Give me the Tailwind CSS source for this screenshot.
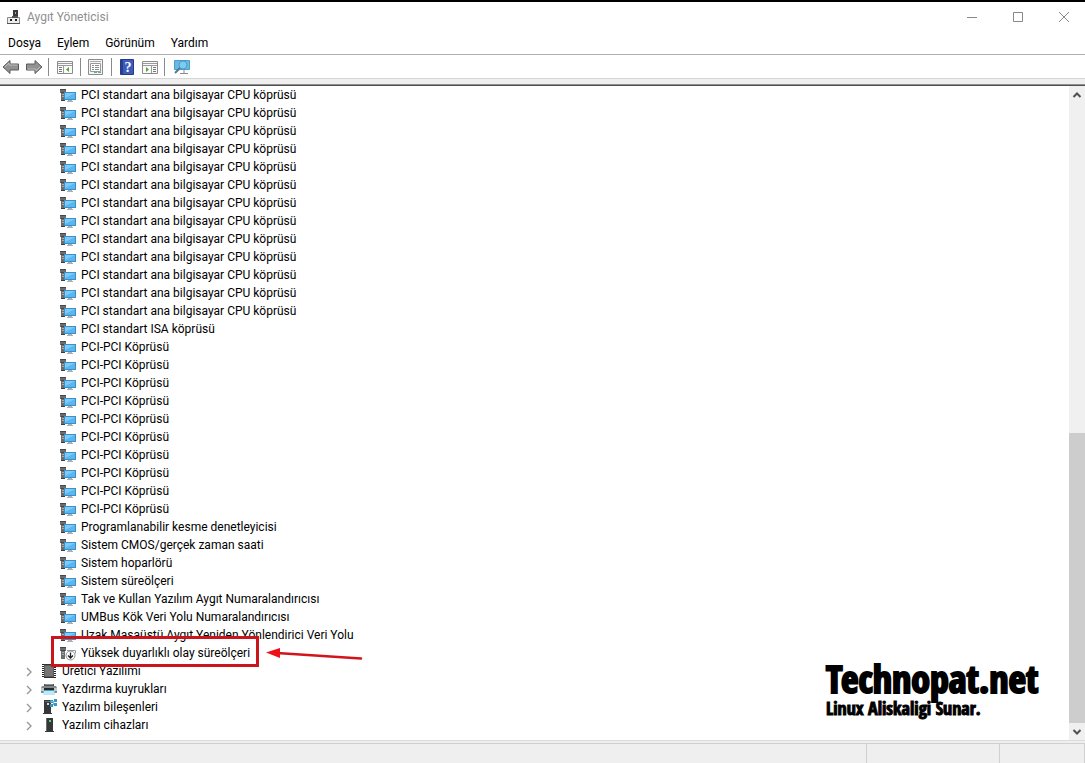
<!DOCTYPE html>
<html lang="tr">
<head>
  <meta charset="UTF-8">
  <meta name="viewport" content="width=device-width, initial-scale=1.0">
  <title>Aygıt Yöneticisi</title>
  <script src="https://cdn.jsdelivr.net/npm/@tailwindcss/browser@4"></script>
</head>
<body class="h-screen flex flex-col overflow-hidden bg-white border-t-2 border-black text-black text-[12px] leading-[18px] font-['Segoe_UI','Roboto',sans-serif]">

  <!-- Icon sprite -->
  <svg class="hidden" xmlns="http://www.w3.org/2000/svg">
    <symbol id="icon-system" viewBox="0 0 16 16">
      <path d="M0 2h6v4H5v8H1V6H0z" fill="#6a6d70" />
      <path d="M0 2h6v1H0zM1 5h4v1H1z" fill="#46494c" />
      <path d="M2 7h2v1H2zM2 9h2v1H2z" fill="#a9adb0" />
      <path d="M1 13h4v1H1z" fill="#3b3e40" />
      <path d="M4 5h12v8H4z" fill="#3f8fc4" />
      <path d="M5 6h10v6H5z" fill="#58b7f0" />
      <path d="M5 6h10L5 11z" fill="#7fcbf7" />
      <path d="M8 13h4v1H8zM7 14h6v1H7z" fill="#a5b0b8" />
    </symbol>
    <symbol id="icon-disabled" viewBox="0 0 16 16">
      <path d="M0 2h6v4H5v8H1V6H0z" fill="#6a6d70" />
      <path d="M0 2h6v1H0zM1 5h4v1H1z" fill="#46494c" />
      <path d="M2 7h2v1H2zM2 9h2v1H2z" fill="#a9adb0" />
      <path d="M7 5.500h8.500v3" fill="none" stroke="#999" />
      <circle cx="10.500" cy="10.500" r="4.500" fill="#fff" stroke="#8f8f8f" />
      <path d="M10.500 7.500v5.500M8 10.500l2.500 2.500L13 10.500" fill="none" stroke="#222" stroke-width="1.300" />
    </symbol>
    <symbol id="icon-firmware" viewBox="0 0 16 16">
      <path d="M3 2h8l2 2v10H3z" fill="#5b5b5b" />
      <path d="M4 3h6l2 2v8H4z" fill="#757575" />
      <path d="M2 1v14M14 4v11" stroke="#222" stroke-width="2" stroke-dasharray="1 1" />
      <path d="M3 1.500h8M11 1.500l2.500 2.500M3 14.500h10" stroke="#333" fill="none" />
    </symbol>
    <symbol id="icon-printer" viewBox="0 0 16 16">
      <path d="M3 3h10v3H3z" fill="#4c5255" />
      <path d="M4 3h8v1H4z" fill="#8b9296" />
      <path d="M1 5h14l1 2v5H0V7z" fill="#83898c" />
      <path d="M0 7h3v3H0zM13 7h3v3h-3z" fill="#c3c8ca" />
      <path d="M3 7h10v2H3z" fill="#26292b" />
      <path d="M3 9h10l1 5H2z" fill="#bfe8f6" />
      <path d="M3 9h10v1H3z" fill="#3da3c9" />
    </symbol>
    <symbol id="icon-component" viewBox="0 0 16 16">
      <path d="M3 1h7v13H3zM2 14h9v1H2z" fill="#34383a" />
      <path d="M4 2h5v1H4z" fill="#63696c" />
      <path d="M6 4h2v2H6z" fill="#c5e5cb" />
      <path d="M9 1h3v3H9zM13 0h3v3h-3zM9 5h3v3H9zM13 4h3v3h-3z" fill="#3d94bd" />
      <path d="M10 2h3v1h-3zM12 3h1v3h-1z" fill="#6dbde0" />
    </symbol>
    <symbol id="icon-softdevice" viewBox="0 0 16 16">
      <path d="M5 1h7v13H5zM4 14h9v1H4z" fill="#34383a" />
      <path d="M5 1h1v13H5z" fill="#686e70" />
      <path d="M8 3h2v2H8z" fill="#5ed078" />
    </symbol>
    <symbol id="icon-chevron" viewBox="0 0 8 10">
      <path d="M2 1l4 4-4 4" fill="none" stroke="#999" stroke-width="1.400" />
    </symbol>
    <symbol id="icon-arrow" viewBox="0 0 18 16">
      <path d="M1 8l7-6.500V5h8.500v6H8v3.500z" fill="#929292" stroke="#5b5b5b" stroke-linejoin="round" />
      <path d="M3 8l4-4v2h8.500" fill="none" stroke="#bdbdbd" />
    </symbol>
  </svg>

  <!-- Title bar -->
  <header class="flex items-center h-8 pl-[6px] pb-[3px] text-[#8f8f8f] shrink-0">
    <svg class="size-4" viewBox="0 0 16 16">
      <path d="M7 1h5v7H7z" fill="#3a3a3a" />
      <path d="M9 3h1v2H9z" fill="#aaa" />
      <path d="M1.500 8.500h12v6h-12z" fill="#ededed" stroke="#888" />
      <path d="M4 10h2v2H4zM9 10h2v2H9z" fill="#222" />
      <path d="M1 14h13v1H1zM6 7h6v2H6z" fill="#555" />
    </svg>
    <h1 class="ml-[5px]">Aygıt Yöneticisi</h1>
    <div class="ml-auto -mr-[2px] flex">
      <button class="w-[46px] h-7 flex items-center justify-center" aria-label="Simge durumuna küçült">
        <svg class="size-3" viewBox="0 0 12 12"><path d="M1 6.500h10" stroke="#888" /></svg>
      </button>
      <button class="w-[46px] h-7 flex items-center justify-center" aria-label="Ekranı kapla">
        <svg class="size-3" viewBox="0 0 12 12"><path d="M1.500 1.500h9v9h-9z" fill="none" stroke="#888" /></svg>
      </button>
      <button class="w-[46px] h-7 flex items-center justify-center" aria-label="Kapat">
        <svg class="size-3" viewBox="0 0 12 12"><path d="M1 1l10 10M11 1L1 11" stroke="#888" /></svg>
      </button>
    </div>
  </header>

  <!-- Menu bar -->
  <nav class="flex gap-4 h-5 pl-2 shrink-0">
    <a href="#">Dosya</a>
    <a href="#">Eylem</a>
    <a href="#">Görünüm</a>
    <a href="#">Yardım</a>
  </nav>

  <!-- Toolbar -->
  <div class="flex items-center h-6 pl-[2px] border-t border-[#b0b0b0] shrink-0">
    <button aria-label="Geri"><svg class="w-[18px] h-4"><use href="#icon-arrow" /></svg></button>
    <button class="ml-[5px] rotate-180" aria-label="İleri"><svg class="w-[18px] h-4"><use href="#icon-arrow" /></svg></button>
    <span class="w-px h-[18px] bg-[#8a8a8a] mx-[5px]"></span>
    <button class="mx-[3px]" aria-label="Konsol ağacını göster/gizle">
      <svg class="size-4" viewBox="0 0 16 16">
        <path d="M.5 2.500h15v12H.5z" fill="#fafafa" stroke="#8b8b8b" />
        <path d="M1 4.500h14M1 6.500h14M6.500 7v7" stroke="#9a9a9a" />
        <path d="M2 8.500h3M2 10.500h3M2 12.500h3" stroke="#777" />
        <path d="M12 8v5L9 10.500z" fill="#55a636" />
      </svg>
    </button>
    <span class="w-px h-[18px] bg-[#8a8a8a] mx-1"></span>
    <button class="mx-[3px]" aria-label="Özellikler">
      <svg class="w-[15px] h-4" viewBox="0 0 15 16">
        <path d="M.5.5h14v15H.5z" fill="#f5f5f5" stroke="#8b8b8b" />
        <path d="M2 2.500h11" stroke="#aaa" />
        <path d="M2.500 4.500h10v8h-10z" fill="#fff" stroke="#999" />
        <path d="M4 6.500h2M7 6.500h4M4 8.500h2M7 8.500h4M4 10.500h2M7 10.500h4" stroke="#8a8a8a" />
        <path d="M6 13.500h3M10 13.500h3" stroke="#4db5a5" />
      </svg>
    </button>
    <span class="w-px h-[18px] bg-[#8a8a8a] mx-[5px]"></span>
    <button class="mx-[3px]" aria-label="Yardım">
      <svg class="w-[14px] h-4" viewBox="0 0 14 16">
        <path d="M.5.5h13v15H.5z" fill="#3d5bbb" stroke="#273a87" />
        <path d="M1 1h2v14H1z" fill="#293e91" />
        <text x="8" y="13" text-anchor="middle" fill="#fff" font-size="14" font-weight="700" font-family="Liberation Serif, serif">?</text>
      </svg>
    </button>
    <button class="ml-[5px]" aria-label="Eylem bölmesini göster/gizle">
      <svg class="size-4" viewBox="0 0 16 16">
        <path d="M.5 2.500h15v12H.5z" fill="#fafafa" stroke="#8b8b8b" />
        <path d="M1 4.500h14M1 6.500h14M9.500 7v7" stroke="#9a9a9a" />
        <path d="M11 8.500h3M11 10.500h3M11 12.500h3" stroke="#777" />
        <path d="M4 8v5l3-2.500z" fill="#55a636" />
      </svg>
    </button>
    <span class="w-px h-[18px] bg-[#8a8a8a] mx-[6px]"></span>
    <button class="ml-[2px]" aria-label="Donanım değişikliklerini tara">
      <svg class="w-[18px] h-4" viewBox="0 0 18 16">
        <path d="M1.500 1.500h15v9h-15z" fill="#66bae7" stroke="#4c9cc8" />
        <path d="M7 14.500h8M11 11v3" stroke="#8a8a8a" />
        <circle cx="10" cy="6" r="4" fill="#7fcaf0" stroke="#4d9dc8" />
        <path d="M7 9l-5 5" stroke="#56788c" stroke-width="2" />
      </svg>
    </button>
  </div>
  <div class="h-[7px] bg-[#efefef] border-t border-[#d5d5d5] border-b border-b-[#8f8f8f] shrink-0"></div>
  <div class="h-px bg-[#505050] shrink-0"></div>

  <!-- Device tree -->
  <main class="relative flex flex-1 min-h-0">
    <div class="flex-1 min-w-0">
      <ul id="devices" class="pl-[60px]"></ul>
      <ul id="categories" class="pl-[25px]"></ul>
    </div>

    <!-- Scrollbar -->
    <div class="w-4 flex flex-col bg-[#f0f0f0] shrink-0">
      <button class="h-[17px] flex items-center justify-center" aria-label="Yukarı kaydır">
        <svg class="w-[10px] h-2" viewBox="0 0 10 8"><path d="M1.500 6L5 2.500 8.500 6" fill="none" stroke="#505050" stroke-width="2" /></svg>
      </button>
      <div class="grow-[330]"></div>
      <div class="grow-[290] bg-[#cdcdcd]"></div>
      <button class="h-[17px] flex items-center justify-center" aria-label="Aşağı kaydır">
        <svg class="w-[10px] h-2" viewBox="0 0 10 8"><path d="M1.500 2L5 5.500 8.500 2" fill="none" stroke="#505050" stroke-width="2" /></svg>
      </button>
    </div>

    <!-- Watermark -->
    <div class="absolute right-12 bottom-[22px] w-[211px] whitespace-nowrap font-bold font-[Impact,'Open_Sans_Condensed','Roboto_Condensed','Liberation_Sans_Narrow','Liberation_Sans',sans-serif]">
      <p class="text-[38px] leading-10 [-webkit-text-stroke:2px_black]">Technopat.net</p>
      <p class="text-[18px] leading-5 [-webkit-text-stroke:1px_black]">Linux Aliskaligi Sunar.</p>
    </div>
  </main>

  <!-- Status bar -->
  <footer class="flex h-[23px] pt-[2px] bg-[#efefef] border-t border-[#dcdcdc] shrink-0">
    <div class="flex-1 border-t border-[#d0d0d0]"></div>
    <div class="w-[133px] border-t border-l border-[#d0d0d0]"></div>
    <div class="w-[86px] border-t border-x border-[#d0d0d0]"></div>
  </footer>

  <script>
    const devices = [
      ...Array(13).fill('PCI standart ana bilgisayar CPU köprüsü'),
      'PCI standart ISA köprüsü',
      ...Array(10).fill('PCI-PCI Köprüsü'),
      'Programlanabilir kesme denetleyicisi',
      'Sistem CMOS/gerçek zaman saati',
      'Sistem hoparlörü',
      'Sistem süreölçeri',
      'Tak ve Kullan Yazılım Aygıt Numaralandırıcısı',
      'UMBus Kök Veri Yolu Numaralandırıcısı',
      'Uzak Masaüstü Aygıt Yeniden Yönlendirici Veri Yolu',
    ];

    const categories = [
      ['icon-firmware', 'Üretici Yazılımı'],
      ['icon-printer', 'Yazdırma kuyrukları'],
      ['icon-component', 'Yazılım bileşenleri'],
      ['icon-softdevice', 'Yazılım cihazları'],
    ];

    const highlighted = `
      <li class="relative flex items-center h-[18px] gap-[5px]">
        <svg class="size-4"><use href="#icon-disabled" /></svg>
        <span>Yüksek duyarlıklı olay süreölçeri</span>
        <span class="absolute -left-[9px] -top-[8px] w-[208px] h-[31px] border-3 border-[#c9151b]"></span>
        <svg class="absolute left-[205px] top-[1px] w-[98px] h-4" viewBox="0 0 98 16">
          <path d="M12 8l84 5.500" stroke="#d2141b" stroke-width="2.500" stroke-linecap="round" />
          <path d="M1 7.500L15 3v10z" fill="#ee1015" />
        </svg>
      </li>`;

    document.getElementById('devices').innerHTML = devices.map(name => `
      <li class="flex items-center h-[18px] gap-[5px]">
        <svg class="size-4"><use href="#icon-system" /></svg>
        <span>${name}</span>
      </li>`).join('') + highlighted;

    document.getElementById('categories').innerHTML = categories.map(([icon, name]) => `
      <li class="flex items-center h-[18px]">
        <button class="mr-2 pt-[2px]" aria-label="Genişlet"><svg class="w-2 h-[10px]"><use href="#icon-chevron" /></svg></button>
        <svg class="size-4 mr-[5px]"><use href="#${icon}" /></svg>
        <span>${name}</span>
      </li>`).join('');
  </script>
</body>
</html>
